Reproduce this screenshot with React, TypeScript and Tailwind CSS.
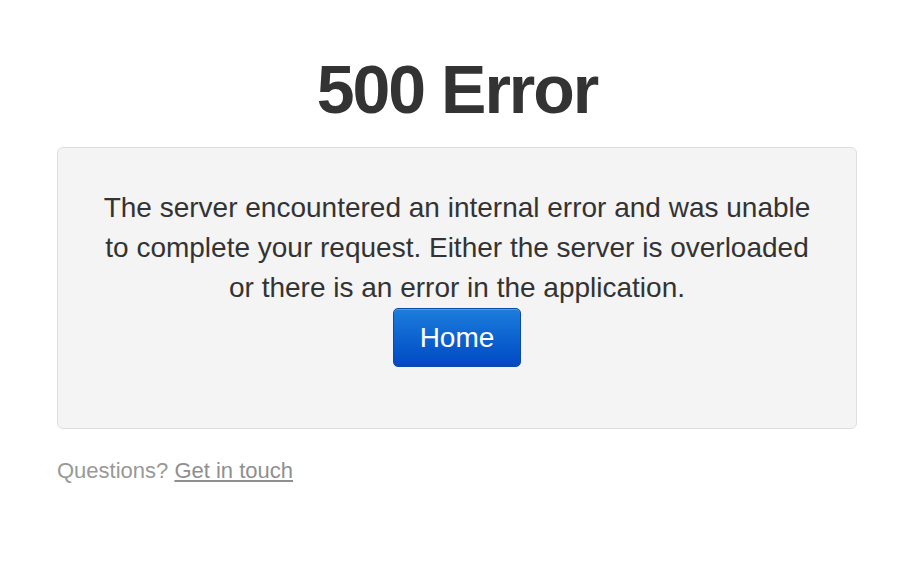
import React from 'react';

export default function App() {
  return (
    <div className="min-h-[570px] w-[920px] bg-white font-['Liberation_Sans',Arial,sans-serif] text-[#333]">
      <div className="ml-[57px] w-[800px] pt-[55px]">
        <h1 className="text-center text-[68px] font-bold leading-none tracking-[-2px] text-[#333]">500 Error</h1>

        <div className="mt-[24px] h-[282px] rounded-[6px] border border-[#dedede] bg-[#f4f4f4] px-[40px] pt-[40px] text-center">
          <p className="text-[28px] leading-[40px] text-[#333]">
            The server encountered an internal error and was unable to complete your request. Either the server is
            overloaded or there is an error in the application.
          </p>
          <a
            href="#"
            className="inline-flex h-[59px] w-[128px] items-center justify-center rounded-[5px] border border-[#0b4aa8] bg-gradient-to-b from-[#1d7ddb] to-[#0548c4] text-[28px] text-white no-underline shadow-[inset_0_1px_0_rgba(255,255,255,0.25)]"
          >
            Home
          </a>
        </div>

        <p className="mt-[27px] text-[22px] leading-[30px] text-[#999]">
          Questions? <a href="#" className="text-[#8f8f8f] underline">Get in touch</a>
        </p>
      </div>
    </div>
  );
}
